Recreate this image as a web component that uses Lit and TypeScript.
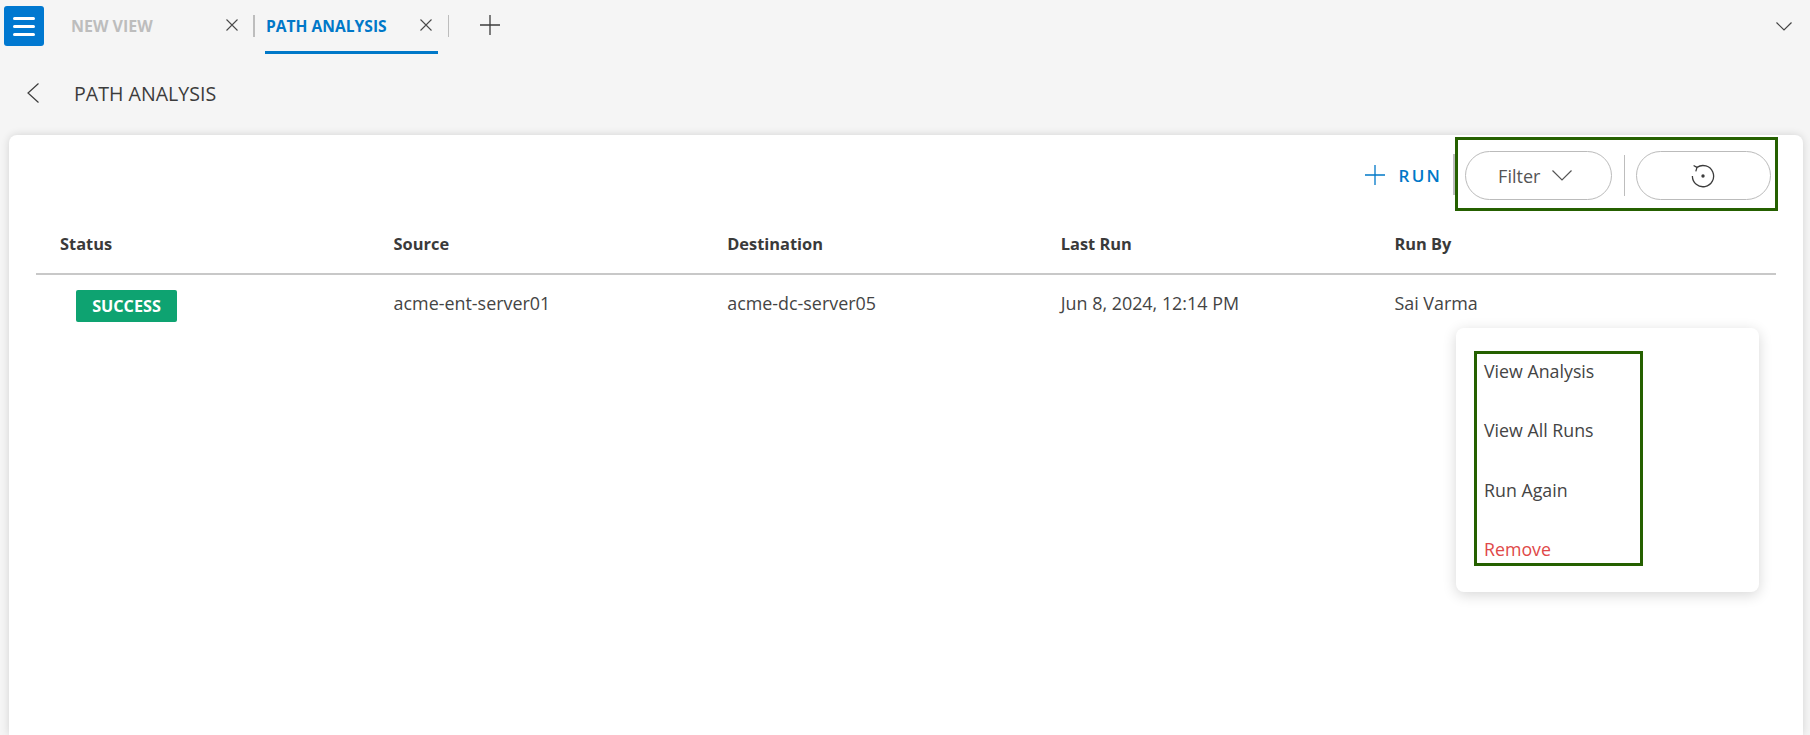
import { LitElement, html, css, svg } from "lit";
import { customElement } from "lit/decorators.js";

const icon = (w: number, h: number, body: unknown, cls = "") =>
  html`<svg class=${cls} width=${w} height=${h} viewBox="0 0 ${w} ${h}" fill="none" stroke="currentColor">${body}</svg>`;

const closeX = () => icon(12, 12, svg`<path d="M0.5 0.5 L11.5 11.5 M11.5 0.5 L0.5 11.5" stroke-width="1.1"/>`, "close");
const plus = () => icon(20, 20, svg`<path d="M10 0 V20 M0 10 H20" stroke-width="1.3"/>`);

const COLUMNS = ["Status", "Source", "Destination", "Last Run", "Run By"];

@customElement("app-root")
export class AppRoot extends LitElement {
  static styles = css`
    :host {
      display: flex;
      flex-direction: column;
      height: 735px;
      overflow: hidden;
      background: #f5f5f5;
      font-family: "Open Sans", "Noto Sans", sans-serif;
      color: #3c3c3c;
    }
    .tabbar {
      height: 60px;
      display: flex;
      align-items: flex-start;
      padding: 6px 18px 0 4px;
      box-sizing: border-box;
      flex: none;
    }
    .menu-btn {
      width: 40px;
      height: 40px;
      border-radius: 3px;
      background: #0078d0;
      display: flex;
      flex-direction: column;
      align-items: center;
      justify-content: center;
      gap: 5px;
      flex: none;
    }
    .menu-btn i {
      display: block;
      width: 22px;
      height: 3px;
      border-radius: 2px;
      background: #fff;
    }
    .tab {
      height: 48px;
      display: flex;
      align-items: flex-start;
      font-weight: 700;
      white-space: nowrap;
      box-sizing: border-box;
      position: relative;
    }
    .tab span { line-height: 40px; height: 40px; }
    .tab .close { color: #4a4a4a; margin-top: 13px; }
    .tab.inactive { width: 182px; margin-left: 27px; padding-right: 15px; color: #bdbdbd; justify-content: space-between; font-size: 16px; }
    .tab.active {
      width: 173px;
      margin-left: 10px;
      color: #0078c8;
      border-bottom: 3px solid #0078c8;
      justify-content: space-between;
      padding-right: 6px;
      padding-left: 1px;
      font-size: 15.6px;
    }
    .sep { width: 2px; height: 22px; background: #bdbdbd; margin-top: 9px; flex: none; }
    .sep.thin { width: 1px; margin-left: 10px; }
    .add { margin: 9px 0 0 31px; color: #3c3c3c; display: flex; }
    .spacer { flex: 1; }
    .collapse { color: #444; margin-top: 16px; display: flex; }
    .title-row {
      height: 75px;
      flex: none;
      display: flex;
      align-items: center;
      box-sizing: border-box;
      padding: 0 0 9px 27px;
      font-size: 19.6px;
    }
    .back { color: #3c3c3c; display: flex; margin-right: 35px; }
    .card {
      flex: 1;
      margin: 0 7px 0 9px;
      background: #fff;
      border-radius: 8px 8px 0 0;
      box-shadow: 0 0 8px rgba(0, 0, 0, 0.14);
      position: relative;
      display: flex;
      flex-direction: column;
    }
    .toolbar {
      display: flex;
      justify-content: flex-end;
      align-items: center;
      padding: 2px 25px 0 0;
    }
    .run {
      display: flex;
      align-items: center;
      color: #0078c8;
      font-size: 17px;
      font-weight: 600;
      letter-spacing: 2.2px;
      gap: 14px;
      margin: 2px 11px 0 0;
    }
    .run-sep { width: 2px; height: 41px; background: #bdbdbd; margin-top: 0; }
    .note {
      border: 3px solid #256000;
      box-sizing: border-box;
    }
    .controls {
      width: 323px;
      height: 74px;
      display: flex;
      align-items: center;
      padding: 3px 4px 0 7px;
    }
    .pill {
      height: 49px;
      border: 1px solid #bbb;
      border-radius: 25px;
      box-sizing: border-box;
      display: flex;
      align-items: center;
      justify-content: center;
      color: #555;
      font-size: 18px;
      background: #fff;
    }
    .pill.filter { width: 148px; gap: 12px; padding-right: 7px; }
    .pill.reset { width: 135px; color: #3c3c3c; padding-right: 2px; }
    .ctl-sep { width: 1px; height: 41px; background: #bdbdbd; margin: 0 11px 0 12px; }
    .grid {
      display: grid;
      grid-template-columns: repeat(4, 333.6px) 1fr;
      margin: 0 27px 0 27px;
    }
    .grid > div { padding-left: 24px; display: flex; align-items: center; }
    .head { height: 64px; border-bottom: 2px solid #c8c8c8; box-sizing: border-box; }
    .head > div { font-size: 16.4px; font-weight: 700; color: #3a3a3a; padding-top: 2px; }
    .row { height: 59px; }
    .row > div { font-size: 17.9px; color: #444; padding-bottom: 4px; }
    .badge {
      margin: 7px 0 0 16px;
      width: 101px;
      height: 32px;
      background: #0ea371;
      color: #fff;
      font-size: 16.2px;
      font-weight: 700;
      border-radius: 2px;
      display: flex;
      align-items: center;
      justify-content: center;
    }
    .popup {
      position: absolute;
      left: 1447px;
      top: 193px;
      width: 303px;
      height: 264px;
      background: #fff;
      border-radius: 8px;
      box-shadow: 0 3px 14px rgba(0, 0, 0, 0.16);
      box-sizing: border-box;
      padding: 23px 0 0 18px;
    }
    .actions {
      width: 169px;
      height: 215px;
      padding: 4px 0 0 7px;
      display: flex;
      flex-direction: column;
      font-size: 17.8px;
      color: #444;
    }
    .actions div { height: 59.4px; flex: none; line-height: 27px; white-space: nowrap; }
    .actions .danger { color: #e04848; }
  `;

  render() {
    return html`
      <div class="tabbar">
        <div class="menu-btn"><i></i><i></i><i></i></div>
        <div class="tab inactive"><span>NEW VIEW</span>${closeX()}</div>
        <div class="sep"></div>
        <div class="tab active"><span>PATH ANALYSIS</span>${closeX()}</div>
        <div class="sep thin"></div>
        <div class="add">${plus()}</div>
        <div class="spacer"></div>
        <div class="collapse">${icon(16, 9, svg`<path d="M0.5 0.5 L8 8 L15.5 0.5" stroke-width="1.2"/>`)}</div>
      </div>
      <div class="title-row">
        <div class="back">${icon(12, 20, svg`<path d="M11.5 0.5 L1 10 L11.5 19.5" stroke-width="1.2"/>`)}</div>
        <span>PATH ANALYSIS</span>
      </div>
      <div class="card">
        <div class="toolbar">
          <div class="run">${plus()}<span>RUN</span></div>
          <div class="run-sep"></div>
          <div class="note controls">
            <div class="pill filter">
              <span>Filter</span>
              ${icon(20, 11, svg`<path d="M0.5 0.5 L10 10 L19.5 0.5" stroke-width="1.2"/>`)}
            </div>
            <div class="ctl-sep"></div>
            <div class="pill reset">
              ${icon(24, 24, svg`<path d="M6 3.4 A10.6 10.6 0 1 1 1.4 12" stroke-width="1.3"/><path d="M2.6 1.5 L6 3.4 L4.8 7.4" stroke-width="1.3"/><circle cx="12" cy="12" r="1.7" fill="currentColor" stroke="none"/>`)}
            </div>
          </div>
        </div>
        <div class="grid head">${COLUMNS.map((c) => html`<div>${c}</div>`)}</div>
        <div class="grid row">
          <div><span class="badge">SUCCESS</span></div>
          <div>acme-ent-server01</div>
          <div>acme-dc-server05</div>
          <div>Jun 8, 2024, 12:14 PM</div>
          <div>Sai Varma</div>
        </div>
        <div class="popup">
          <div class="note actions">
            <div>View Analysis</div>
            <div>View All Runs</div>
            <div>Run Again</div>
            <div class="danger">Remove</div>
          </div>
        </div>
      </div>
    `;
  }
}
